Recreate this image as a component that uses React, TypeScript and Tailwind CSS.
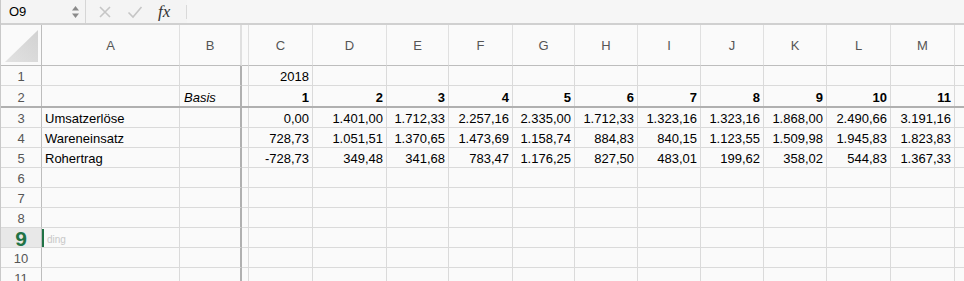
import React from 'react';

const cols =
  'grid grid-cols-[41px_138px_62px_7px_64px_74px_62px_64px_62px_63px_63px_63px_63px_64px_64px_10px]';

const letters = ['C', 'D', 'E', 'F', 'G', 'H', 'I', 'J', 'K', 'L', 'M'];

const rows: { label: string; values: string[] }[] = [
  {
    label: 'Umsatzerlöse',
    values: ['0,00', '1.401,00', '1.712,33', '2.257,16', '2.335,00', '1.712,33', '1.323,16', '1.323,16', '1.868,00', '2.490,66', '3.191,16'],
  },
  {
    label: 'Wareneinsatz',
    values: ['728,73', '1.051,51', '1.370,65', '1.473,69', '1.158,74', '884,83', '840,15', '1.123,55', '1.509,98', '1.945,83', '1.823,83'],
  },
  {
    label: 'Rohertrag',
    values: ['-728,73', '349,48', '341,68', '783,47', '1.176,25', '827,50', '483,01', '199,62', '358,02', '544,83', '1.367,33'],
  },
];

const cell = 'border-r border-b border-[#dadada] h-[20px] pt-[3px] flex items-center';
const num = `${cell} justify-end pr-[3px] text-black`;

function RowHead({ n, className = '' }: { n: string; className?: string }) {
  return (
    <div className={`${cell} justify-center border-r-[#bdbdbd] text-[#555] ${className}`}>
      {n}
    </div>
  );
}

function Frozen() {
  return <div className={`${cell} border-r-2 border-r-[#b0b0b0]`} />;
}

function EmptyRow({ n }: { n: string }) {
  return (
    <div className={cols}>
      <RowHead n={n} />
      <div className={cell} />
      <Frozen />
      {[...letters, '', ''].map((l, i) => (
        <div key={i} className={cell} />
      ))}
    </div>
  );
}

export default function App() {
  return (
    <div className="w-[964px] h-[281px] overflow-hidden bg-[#fafafa] font-['Liberation_Sans',Arial,sans-serif] text-[13px] text-black border-l border-[#c9c9c9]">
      {/* formula bar */}
      <div className="flex h-[25px] items-center border-b-2 border-[#d0d0d0] bg-[#f4f4f4]">
        <div className="flex h-full w-[85px] items-center justify-between border-r border-[#d6d6d6] pl-[8px] pr-[5px]">
          <span>O9</span>
          <svg width="9" height="16" viewBox="0 0 9 16" className="text-[#8a8a8a]">
            <path d="M4.5 2 L8 6.5 H1 Z" fill="currentColor" />
            <path d="M4.5 14 L8 9.5 H1 Z" fill="currentColor" />
          </svg>
        </div>
        <div className="ml-[12px] flex w-[88px] items-center gap-[15px]">
          <svg width="14" height="14" viewBox="0 0 14 14" className="text-[#c6c6c6]">
            <path d="M2 2 L12 12 M12 2 L2 12" stroke="currentColor" strokeWidth="1.6" />
          </svg>
          <svg width="16" height="14" viewBox="0 0 16 14" className="text-[#c6c6c6]">
            <path d="M1.5 7.5 L6 12 L14.5 2" stroke="currentColor" strokeWidth="1.6" fill="none" />
          </svg>
          <span className="font-['Liberation_Serif',serif] text-[17px] italic text-[#333] leading-none">fx</span>
        </div>
        <div className="h-[14px] border-l border-[#d9d9d9]" />
        <div className="h-full flex-1 bg-[#f6f6f6]" />
      </div>

      {/* column headers */}
      <div className={cols}>
        <div className="flex h-[41px] items-end justify-end border-r border-b border-[#bdbdbd] pr-[3px] pb-[3px]">
          <svg width="33" height="32" viewBox="0 0 33 32">
            <defs>
              <linearGradient id="tri" x1="0" y1="1" x2="1" y2="0">
                <stop offset="0" stopColor="#e2e2e2" />
                <stop offset="1" stopColor="#d2d2d2" />
              </linearGradient>
            </defs>
            <path d="M0 32 L33 0 L33 32 Z" fill="url(#tri)" />
          </svg>
        </div>
        {['A', 'B'].map((l) => (
          <div
            key={l}
            className={`flex h-[41px] items-center justify-center border-b border-r border-[#bdbdbd] border-r-[#e0e0e0] pt-[2px] text-[#555] ${
              l === 'B' ? 'border-r-2 border-r-[#b0b0b0]' : ''
            }`}
          >
            {l}
          </div>
        ))}
        <div className="h-[41px] border-b border-r border-[#bdbdbd] border-r-[#e0e0e0]" />
        {[...letters, ''].map((l, i) => (
          <div
            key={i}
            className="flex h-[41px] items-center justify-center border-b border-r border-[#bdbdbd] border-r-[#e0e0e0] pt-[2px] text-[#555]"
          >
            {l}
          </div>
        ))}
      </div>

      {/* row 1 */}
      <div className={cols}>
        <RowHead n="1" />
        <div className={cell} />
        <Frozen />
        <div className={cell} />
        <div className={num}>2018</div>
        {letters.slice(1).map((l) => (
          <div key={l} className={cell} />
        ))}
        <div className={cell} />
      </div>

      {/* row 2 */}
      <div className={`${cols} border-b-2 border-[#b0b0b0]`}>
        <RowHead n="2" className="border-b-0" />
        <div className={`${cell} border-b-0`} />
        <div className={`${cell} border-b-0 border-r-2 border-r-[#b0b0b0] pl-[4px] italic`}>Basis</div>
        <div className={`${cell} border-b-0`} />
        {letters.map((l, i) => (
          <div key={l} className={`${num} border-b-0 font-bold`}>
            {i + 1}
          </div>
        ))}
        <div className={`${cell} border-b-0`} />
      </div>

      {/* data rows */}
      {rows.map((r, ri) => (
        <div key={r.label} className={cols}>
          <RowHead n={String(ri + 3)} />
          <div className={`${cell} pl-[3px]`}>{r.label}</div>
          <Frozen />
          <div className={cell} />
          {r.values.map((v, i) => (
            <div key={i} className={num}>
              {v}
            </div>
          ))}
          <div className={cell} />
        </div>
      ))}

      <EmptyRow n="6" />
      <EmptyRow n="7" />
      <EmptyRow n="8" />

      {/* row 9, selected */}
      <div className={cols}>
        <div className={`${cell} justify-center border-r-[#bdbdbd] bg-[#e8e8e8] text-[21px] font-bold text-[#217346]`}>9</div>
        <div className={`${cell} relative pl-[5px] text-[10px] text-[#c8c8c8]`}>
          <span className="absolute left-0 top-[1px] h-[18px] w-[2px] bg-[#217346]" />
          ding
        </div>
        <Frozen />
        {[...letters, '', ''].map((l, i) => (
          <div key={i} className={cell} />
        ))}
      </div>

      <EmptyRow n="10" />
      <EmptyRow n="11" />
    </div>
  );
}
